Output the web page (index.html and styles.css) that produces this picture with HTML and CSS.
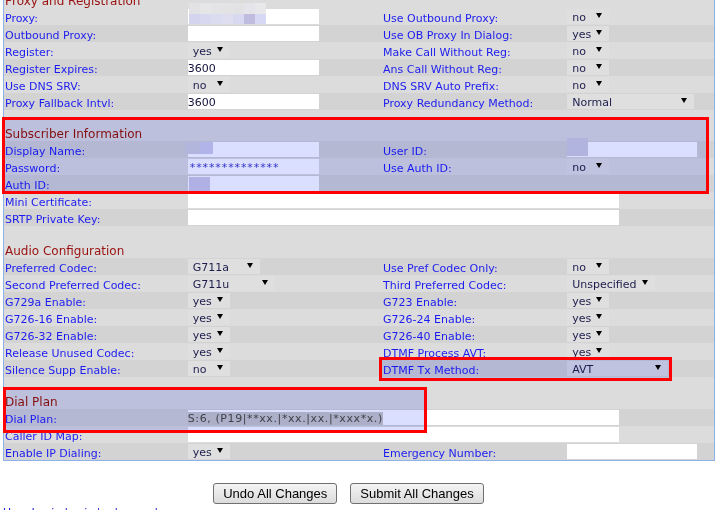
FILE: index.html
```html
<!DOCTYPE html>
<html>
<head>
<meta charset="utf-8">
<title>Line Configuration</title>
<link rel="stylesheet" href="styles.css">
</head>
<body>
<div class="page">
  <table class="cfg">
    <colgroup><col class="c1"><col class="c2"><col class="c3"><col class="c4"></colgroup>
    <tr class="hdr"><td colspan="4">Proxy and Registration</td></tr>
    <tr class="l">
      <td class="lbl">Proxy:</td>
      <td class="val rel"><div class="inp w131"></div>
        <div class="mosaic m-proxy">
          <i class="a1"></i><i class="a2"></i><i class="a3"></i><i class="a4"></i><i class="a5"></i><i class="a6"></i><i class="a7"></i>
          <i class="b1"></i><i class="b2"></i><i class="b3"></i><i class="b4"></i><i class="b5"></i><i class="b6"></i><i class="b7"></i>
        </div>
      </td>
      <td class="lbl2">Use Outbound Proxy:</td>
      <td class="val"><span class="sel w42">no<i class="arr"></i></span></td>
    </tr>
    <tr class="d">
      <td class="lbl">Outbound Proxy:</td>
      <td class="val"><div class="inp w131"></div></td>
      <td class="lbl2">Use OB Proxy In Dialog:</td>
      <td class="val"><span class="sel w42">yes<i class="arr"></i></span></td>
    </tr>
    <tr class="l">
      <td class="lbl">Register:</td>
      <td class="val"><span class="sel w42">yes<i class="arr"></i></span></td>
      <td class="lbl2">Make Call Without Reg:</td>
      <td class="val"><span class="sel w42">no<i class="arr"></i></span></td>
    </tr>
    <tr class="d">
      <td class="lbl">Register Expires:</td>
      <td class="val"><div class="inp w131">3600</div></td>
      <td class="lbl2">Ans Call Without Reg:</td>
      <td class="val"><span class="sel w42">no<i class="arr"></i></span></td>
    </tr>
    <tr class="l">
      <td class="lbl">Use DNS SRV:</td>
      <td class="val"><span class="sel w42">no<i class="arr"></i></span></td>
      <td class="lbl2">DNS SRV Auto Prefix:</td>
      <td class="val"><span class="sel w42">no<i class="arr"></i></span></td>
    </tr>
    <tr class="d">
      <td class="lbl">Proxy Fallback Intvl:</td>
      <td class="val"><div class="inp w131">3600</div></td>
      <td class="lbl2">Proxy Redundancy Method:</td>
      <td class="val"><span class="sel w127">Normal<i class="arr"></i></span></td>
    </tr>
    <tr class="blank b14"><td colspan="4"></td></tr>

    <tr class="hdr"><td colspan="4">Subscriber Information</td></tr>
    <tr class="d">
      <td class="lbl">Display Name:</td>
      <td class="val rel"><div class="inp w131"></div><div class="mosaic m-disp"><i class="p1"></i><i class="p2"></i></div></td>
      <td class="lbl2">User ID:</td>
      <td class="val rel"><div class="inp w130"></div><div class="mosaic m-user"></div></td>
    </tr>
    <tr class="l">
      <td class="lbl">Password:</td>
      <td class="val"><div class="inp w131 pw">**************</div></td>
      <td class="lbl2">Use Auth ID:</td>
      <td class="val"><span class="sel w42">no<i class="arr"></i></span></td>
    </tr>
    <tr class="d">
      <td class="lbl">Auth ID:</td>
      <td class="val rel"><div class="inp w131"></div><div class="mosaic m-auth"></div></td>
      <td class="lbl2"></td>
      <td class="val"></td>
    </tr>
    <tr class="l">
      <td class="lbl">Mini Certificate:</td>
      <td class="val" colspan="3"><div class="inp w431"></div></td>
    </tr>
    <tr class="d">
      <td class="lbl">SRTP Private Key:</td>
      <td class="val" colspan="3"><div class="inp w431"></div></td>
    </tr>
    <tr class="blank"><td colspan="4"></td></tr>

    <tr class="hdr"><td colspan="4">Audio Configuration</td></tr>
    <tr class="d">
      <td class="lbl">Preferred Codec:</td>
      <td class="val"><span class="sel w72">G711a<i class="arr"></i></span></td>
      <td class="lbl2">Use Pref Codec Only:</td>
      <td class="val"><span class="sel w42">no<i class="arr"></i></span></td>
    </tr>
    <tr class="l">
      <td class="lbl">Second Preferred Codec:</td>
      <td class="val"><span class="sel w87">G711u<i class="arr"></i></span></td>
      <td class="lbl2">Third Preferred Codec:</td>
      <td class="val"><span class="sel w88">Unspecified<i class="arr"></i></span></td>
    </tr>
    <tr class="d">
      <td class="lbl">G729a Enable:</td>
      <td class="val"><span class="sel w42">yes<i class="arr"></i></span></td>
      <td class="lbl2">G723 Enable:</td>
      <td class="val"><span class="sel w42">yes<i class="arr"></i></span></td>
    </tr>
    <tr class="l">
      <td class="lbl">G726-16 Enable:</td>
      <td class="val"><span class="sel w42">yes<i class="arr"></i></span></td>
      <td class="lbl2">G726-24 Enable:</td>
      <td class="val"><span class="sel w42">yes<i class="arr"></i></span></td>
    </tr>
    <tr class="d">
      <td class="lbl">G726-32 Enable:</td>
      <td class="val"><span class="sel w42">yes<i class="arr"></i></span></td>
      <td class="lbl2">G726-40 Enable:</td>
      <td class="val"><span class="sel w42">yes<i class="arr"></i></span></td>
    </tr>
    <tr class="l">
      <td class="lbl">Release Unused Codec:</td>
      <td class="val"><span class="sel w42">yes<i class="arr"></i></span></td>
      <td class="lbl2">DTMF Process AVT:</td>
      <td class="val"><span class="sel w42">yes<i class="arr"></i></span></td>
    </tr>
    <tr class="d">
      <td class="lbl">Silence Supp Enable:</td>
      <td class="val"><span class="sel w42">no<i class="arr"></i></span></td>
      <td class="lbl2">DTMF Tx Method:</td>
      <td class="val"><span class="sel w101">AVT<i class="arr"></i></span></td>
    </tr>
    <tr class="blank"><td colspan="4"></td></tr>

    <tr class="hdr"><td colspan="4">Dial Plan</td></tr>
    <tr class="d">
      <td class="lbl">Dial Plan:</td>
      <td class="val" colspan="3"><div class="inp w431 dp"><span class="selected">S:6, (P19|**xx.|*xx.|xx.|*xxx*x.)</span></div></td>
    </tr>
    <tr class="l">
      <td class="lbl">Caller ID Map:</td>
      <td class="val" colspan="3"><div class="inp w431"></div></td>
    </tr>
    <tr class="d">
      <td class="lbl">Enable IP Dialing:</td>
      <td class="val"><span class="sel w42">yes<i class="arr"></i></span></td>
      <td class="lbl2">Emergency Number:</td>
      <td class="val"><div class="inp w130"></div></td>
    </tr>
  </table>

  <div class="actions">
    <button class="btn" type="button">Undo All Changes</button>
    <button class="btn" type="button">Submit All Changes</button>
  </div>
  <div class="foot"><span class="lnk">User Login</span> <span class="lnk">basic</span> | <span class="lnk">advanced</span></div>

  <div class="mark mk1"></div>
  <div class="mark mk2"></div>
  <div class="mark mk3"></div>
</div>
</body>
</html>
```

FILE: styles.css
```css
html, body {
  margin: 0;
  padding: 0;
  background: #ffffff;
}
body {
  font-family: "DejaVu Sans", Verdana, sans-serif;
  font-size: 11px;
  overflow: hidden;
}
.page {
  position: relative;
  width: 725px;
  height: 510px;
  overflow: hidden;
}
.cfg {
  margin: -9px 0 0 3px;
  width: 712px;
  table-layout: fixed;
  border-collapse: collapse;
  border: 1px solid #8fb1ea;
  border-top: none;
}
.c1 { width: 184px; }
.c2 { width: 190px; }
.c3 { width: 189px; }
.c4 { width: 147px; }
.cfg td {
  padding: 0;
  vertical-align: top;
  white-space: nowrap;
  overflow: visible;
}
.cfg tr.l td { background: #dcdcdc; }
.cfg tr.d td { background: #d3d3d3; }
.cfg tr.hdr td {
  background: #dcdcdc;
  color: #9a0f0f;
  font-size: 12px;
  line-height: 13px;
  padding: 4px 0 0 1px;
}
.cfg tr.blank td { background: #dcdcdc; height: 15px; }
.cfg tr.blank.b14 td { height: 14px; }
.cfg td.val { height: 17px; }
.cfg td.lbl,
.cfg td.lbl2 {
  color: #1c1cf0;
  line-height: 13px;
  padding-top: 4px;
}
.cfg td.lbl { padding-left: 1px; }
.cfg td.lbl2 { padding-left: 5px; }
.rel { position: relative; }
.inp {
  box-sizing: border-box;
  height: 15px;
  margin-top: 1px;
  padding-top: 2px;
  background: #ffffff;
  line-height: 13px;
  color: #12123a;
  overflow: hidden;
}
.w130 { width: 130px; }
.w131 { width: 131px; }
.w431 { width: 431px; }
.pw {
  color: #3a3ac4;
  padding: 1px 0 0 2px;
  line-height: 15px;
  letter-spacing: 0.9px;
}
.dp { color: #4a4a4a; letter-spacing: 0.6px; }
.dp .selected { background: #c8c8c8; }
.sel {
  box-sizing: border-box;
  display: flex;
  align-items: flex-start;
  justify-content: space-between;
  height: 15px;
  margin-top: 1px;
  padding: 3px 7px 0 5px;
  background: #dfdfdf;
  color: #1d1d4d;
  line-height: 12px;
}
.w42 { width: 42px; }
.w72 { width: 72px; }
.w87 { width: 87px; }
.w88 { width: 88px; }
.w101 { width: 101px; }
.w127 { width: 127px; }
.arr {
  display: block;
  flex: none;
  width: 0;
  height: 0;
  margin-top: 1px;
  border-left: 3px solid transparent;
  border-right: 3px solid transparent;
  border-top: 5px solid #000000;
}

/* pixelated redactions */
.mosaic { position: absolute; }
.mosaic i { display: block; }
.m-proxy {
  left: 1px;
  top: -5px;
  width: 77px;
  height: 21px;
  display: grid;
  grid-template-columns: repeat(7, 11px);
  grid-template-rows: 11px 10px;
}
.m-proxy .a1 { background: #e2e2e4; }
.m-proxy .a2 { background: #e6e6e8; }
.m-proxy .a3 { background: #e4e4e6; }
.m-proxy .a4 { background: #e3e3e6; }
.m-proxy .a5 { background: #e2e2e4; }
.m-proxy .a6 { background: #e4e4ea; }
.m-proxy .a7 { background: #e8e8ea; }
.m-proxy .b1 { background: #d4d4ee; }
.m-proxy .b2 { background: #d8d8f0; }
.m-proxy .b3 { background: #dcdcf0; }
.m-proxy .b4 { background: #dedef0; }
.m-proxy .b5 { background: #d8d8f0; }
.m-proxy .b6 { background: #c0bce0; }
.m-proxy .b7 { background: #d6d8f4; }
.m-disp {
  left: -3px;
  top: 1px;
  width: 28px;
  height: 12px;
  display: grid;
  grid-template-columns: 15px 13px;
}
.m-disp .p1 { background: #d1d0dc; }
.m-disp .p2 { background: #cdcee8; }
.m-auth {
  left: 1px;
  top: 2px;
  width: 21px;
  height: 14px;
  background: #cdc9e4;
}
.m-user {
  left: 0;
  top: -3px;
  width: 21px;
  height: 18px;
  background: #cfcee0;
}

.actions {
  display: flex;
  justify-content: center;
  gap: 13px;
  margin-top: 22px;
  padding-right: 28px;
}
.btn {
  font-family: "Liberation Sans", Arial, sans-serif;
  font-size: 13px;
  height: 21px;
  padding: 0 9px;
  color: #000000;
  border: 1px solid #707070;
  border-radius: 3px;
  background: linear-gradient(#f4f4f4, #dcdcdc);
}
.foot {
  margin: 2px 0 0 3px;
  color: #2222dd;
  font-size: 11px;
  line-height: 13px;
}
.lnk { text-decoration: underline; }

/* annotation boxes */
.mark {
  position: absolute;
  box-sizing: border-box;
  border: 3px solid #ff0000;
}
.mark::before {
  content: "";
  position: absolute;
  inset: 0;
  background: #dbdfff;
  mix-blend-mode: multiply;
}
.mk1 { left: 2px; top: 117px; width: 707px; height: 77px; }
.mk2 { left: 379px; top: 357px; width: 293px; height: 24px; }
.mk3 { left: 3px; top: 387px; width: 424px; height: 46px; }
```
